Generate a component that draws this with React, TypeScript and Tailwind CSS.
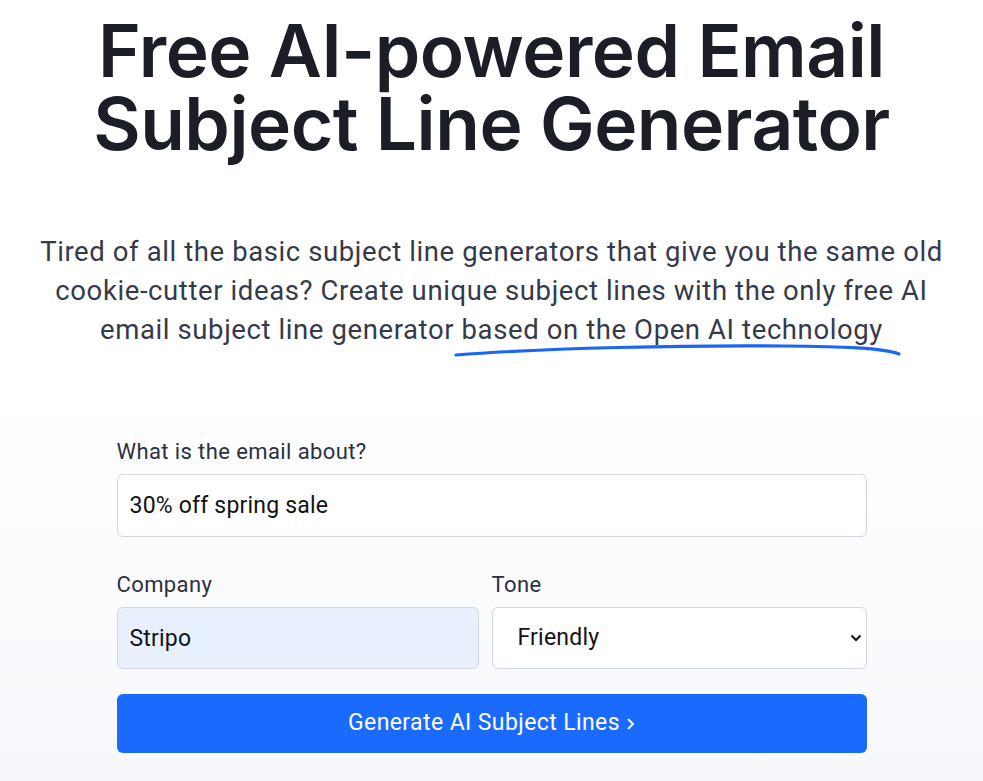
import React from "react";

export default function App() {
  return (
    <div
      className="min-h-[781px] w-full bg-gradient-to-b from-white from-[50%] to-[#f7f8fc] text-[#1d2029]"
      style={{ fontFamily: "Roboto, 'Noto Sans', sans-serif" }}
    >
      <div className="flex flex-col items-center pt-[14px]">
        <h1
          className="text-center text-[73px] font-semibold leading-[73px] tracking-[-0.5px] text-[#1b1e27]"
          style={{ fontFamily: "Inter, 'Noto Sans', sans-serif" }}
        >
          Free AI-powered Email
          <br />
          Subject Line Generator
        </h1>

        <p className="mt-[72px] w-[920px] text-center text-[27.5px] font-normal leading-[39px] tracking-[0.6px] text-[#353a4a]">
          Tired of all the basic subject line generators that give you the same
          old cookie-cutter ideas? Create unique subject lines with the only
          free AI email subject line generator{" "}
          <span className="relative inline-block">
            based on the Open AI technology
            <svg
              className="absolute left-[-9px] top-[32px]"
              width="452"
              height="20"
              viewBox="0 0 452 20"
              fill="none"
            >
              <path
                d="M3 13 C 90 6, 240 3, 330 4 C 390 4.5, 430 6, 446 12"
                stroke="#1a66f5"
                strokeWidth="3.2"
                strokeLinecap="round"
              />
            </svg>
          </span>
        </p>

        <form className="mt-[89px] flex w-[750px] flex-col">
          <label className="text-[22px] leading-[28px] tracking-[0.4px] text-[#2b3040]">
            What is the email about?
          </label>
          <input
            defaultValue="30% off spring sale"
            className="mt-[8px] h-[63px] rounded-[6px] border border-[#d3d6e3] bg-white px-[12px] text-[23px] tracking-[0.2px] text-[#121212] outline-none"
          />

          <div className="mt-[34px] flex gap-[13px]">
            <div className="flex w-[362px] flex-col">
              <label className="text-[22px] leading-[28px] tracking-[0.4px] text-[#2b3040]">
                Company
              </label>
              <input
                defaultValue="Stripo"
                className="mt-[8px] h-[62px] rounded-[6px] border border-[#d3d6e3] bg-[#e8f0fe] px-[12px] text-[23px] tracking-[0.2px] text-[#121212] outline-none"
              />
            </div>
            <div className="flex flex-1 flex-col">
              <label className="text-[22px] leading-[28px] tracking-[0.4px] text-[#2b3040]">
                Tone
              </label>
              <div className="relative mt-[8px]">
                <select
                  defaultValue="Friendly"
                  className="h-[62px] w-full appearance-none rounded-[6px] border border-[#d3d6e3] bg-white px-[25px] text-[23px] tracking-[0.2px] text-[#121212] outline-none"
                >
                  <option>Friendly</option>
                  <option>Professional</option>
                  <option>Funny</option>
                </select>
                <svg
                  className="pointer-events-none absolute right-[5px] top-[26px]"
                  width="12"
                  height="10"
                  viewBox="0 0 12 10"
                  fill="none"
                >
                  <path
                    d="M1.5 2.5 L6 7 L10.5 2.5"
                    stroke="#111"
                    strokeWidth="2"
                  />
                </svg>
              </div>
            </div>
          </div>

          <button
            type="button"
            className="mt-[25px] flex h-[59px] items-center justify-center rounded-[6px] bg-[#1a6afd] text-[23px] tracking-[0.4px] text-white"
          >
            Generate AI Subject Lines
            <svg
              className="ml-[6px]"
              width="9"
              height="16"
              viewBox="0 0 9 16"
              fill="none"
            >
              <path d="M2 3 L7 8 L2 13" stroke="white" strokeWidth="1.8" />
            </svg>
          </button>
        </form>
      </div>
    </div>
  );
}
